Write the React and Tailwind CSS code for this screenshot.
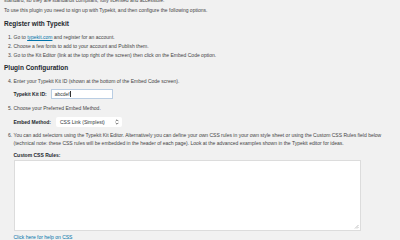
function Item({ n, className = "", children }) {
  return (
    <li className={`flex pl-[4px] ${className}`}>
      <span className="w-[5.5px] shrink-0">{n}</span>
      <div className="min-w-0">{children}</div>
    </li>
  );
}

function Chevrons() {
  return (
    <svg width="4" height="6" viewBox="0 0 4 6" className="shrink-0">
      <path d="M0.6 2.2 L2 0.8 L3.4 2.2" fill="none" stroke="#333" strokeWidth="0.7" />
      <path d="M0.6 3.8 L2 5.2 L3.4 3.8" fill="none" stroke="#333" strokeWidth="0.7" />
    </svg>
  );
}

export default function App() {
  return (
    <div className="w-[400px] h-[240px] overflow-hidden bg-[#f1f1f1] font-['Liberation_Sans',Arial,sans-serif] text-[5px] leading-[8px] text-[#444]">
      <div className="pl-[4px]">
        <p className="-mt-[4px] whitespace-nowrap">
          standard, so they are standards compliant, fully licensed and accessible.
        </p>
        <p className="mt-[2px] whitespace-nowrap">
          To use this plugin you need to sign up with Typekit, and then configure the following options.
        </p>

        <h2 className="mt-[5px] text-[6.5px] leading-[10px] font-semibold text-[#23282d]">
          Register with Typekit
        </h2>
        <ol className="mt-[4px] leading-[9px] whitespace-nowrap">
          <Item n="1.">
            Go to <a className="text-[#0073aa] underline">typekit.com</a> and register for an account.
          </Item>
          <Item n="2.">Choose a few fonts to add to your account and Publish them.</Item>
          <Item n="3.">
            Go to the Kit Editor (link at the top right of the screen) then click on the Embed Code option.
          </Item>
        </ol>

        <h2 className="mt-[3px] text-[6.5px] leading-[10px] font-semibold text-[#23282d]">
          Plugin Configuration
        </h2>
        <ol className="whitespace-nowrap">
          <Item n="4." className="mt-[4px]">
            Enter your Typekit Kit ID (shown at the bottom of the Embed Code screen).
            <div className="mt-[4px] flex items-center gap-[4px] h-[10px]">
              <span className="font-semibold text-[#23282d]">Typekit Kit ID:</span>
              <div className="w-[62px] h-[10px] bg-white border border-[#b9cde3] flex items-center pl-[3px] text-[#32373c]">
                abcdef
                <span className="ml-[0.5px] w-[0.5px] h-[6px] bg-[#333]" />
              </div>
            </div>
          </Item>
          <Item n="5." className="mt-[5px]">
            Choose your Preferred Embed Method.
            <div className="mt-[5px] flex items-center gap-[5px] h-[10px]">
              <span className="font-semibold text-[#23282d]">Embed Method:</span>
              <div className="w-[66px] h-[10px] bg-white rounded-[2px] flex items-center justify-between pl-[4px] pr-[3px] text-[#32373c]">
                CSS Link (Simplest)
                <Chevrons />
              </div>
            </div>
          </Item>
          <Item n="6." className="mt-[4px]">
            You can add selectors using the Typekit Kit Editor. Alternatively you can define your own CSS rules in your own style sheet or using the Custom CSS Rules field below
            <br />
            (technical note: these CSS rules will be embedded in the header of each page). Look at the advanced examples shown in the Typekit editor for ideas.
            <div className="mt-[4px] font-semibold text-[#23282d]">Custom CSS Rules:</div>
            <div className="mt-[1px] relative w-[347px] h-[71px] bg-white border border-[#dcdcdc]">
              <svg width="5" height="5" viewBox="0 0 5 5" className="absolute right-[1px] bottom-[1px]">
                <path d="M4.5 1 L1 4.5 M4.5 3 L3 4.5" stroke="#999" strokeWidth="0.6" />
              </svg>
            </div>
            <a className="mt-[2px] block text-[#0073aa] underline">Click here for help on CSS</a>
          </Item>
        </ol>
      </div>
    </div>
  );
}
